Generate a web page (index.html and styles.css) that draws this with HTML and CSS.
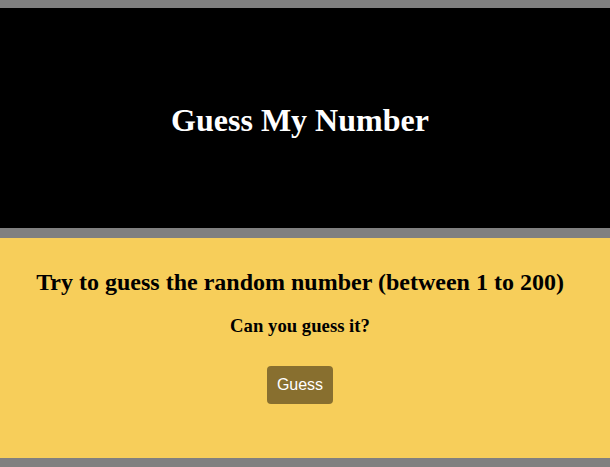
FILE: index.html
```html
<!DOCTYPE html>
<html>
<head>
<meta charset="utf-8">
<link rel="stylesheet" href="styles.css">
</head>
<body>
<header class="hero">
  <h1 class="title">Guess My Number</h1>
</header>
<main class="game">
  <h2 class="prompt">Try to guess the random number (between 1 to 200)</h2>
  <h3 class="question">Can you guess it?</h3>
  <button class="guess-btn">Guess</button>
</main>
</body>
</html>
```
FILE: styles.css
```css
html, body {
  margin: 0;
  padding: 0;
}
body {
  background: #808080;
  padding: 8px 0 9px;
  font-family: "Liberation Serif", "Times New Roman", serif;
}
.hero {
  background: #000;
  height: 220px;
  display: flex;
  align-items: center;
  justify-content: center;
  margin-bottom: 10px;
  padding-right: 10px;
}
.title {
  color: #fff;
  font-size: 32px;
  font-weight: bold;
  margin: 0;
  line-height: 37px;
  padding-top: 4px;
}
.game {
  background: #f7ce5a;
  height: 220px;
  display: flex;
  flex-direction: column;
  align-items: center;
  box-sizing: border-box;
  padding-top: 30px;
  padding-right: 10px;
}
.prompt {
  margin: 0;
  font-size: 24px;
  line-height: 28px;
  color: #000;
}
.question {
  margin: 19px 0 0;
  font-size: 18.72px;
  line-height: 22px;
  color: #000;
}
.guess-btn {
  margin-top: 29px;
  background: #886f2f;
  color: #fff;
  border: none;
  border-radius: 4px;
  font-family: "Liberation Sans", Arial, sans-serif;
  font-size: 16px;
  line-height: 18px;
  padding: 10px 10px;
}
```
